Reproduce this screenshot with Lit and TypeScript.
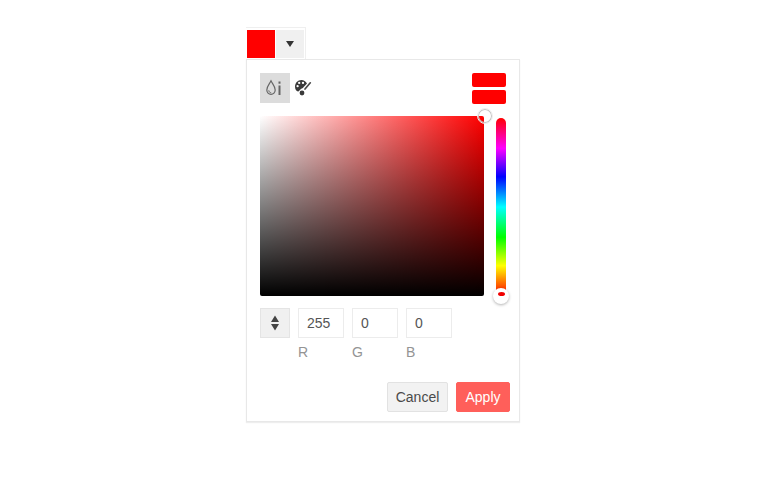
import { LitElement, html, css } from "lit";
import { customElement } from "lit/decorators.js";

@customElement("app-root")
export class AppRoot extends LitElement {
  static styles = css`
    :host { display: block; width: 770px; height: 481px; background: #fff; font-family: "Liberation Sans", Arial, sans-serif; color: #555; overflow: hidden; }
    * { box-sizing: border-box; }
    .wrap { padding: 27px 0 0 246px; }
    .trigger { display: flex; width: 60px; height: 32px; padding: 2px 1px 0 1px; gap: 1px; border: 1px solid #efefef; border-bottom: none; border-left: none; background: #fff; }
    .swatch { width: 28px; height: 28px; background: #f00; }
    .arrow { flex: 1; height: 28px; background: #f0f0f0; display: flex; align-items: center; justify-content: center; }
    .panel { width: 274px; height: 363px; border: 1px solid #e8e8e8; background: #fff; padding: 13px 9px 0 13px; box-shadow: 0 1px 1px #eee; }
    .top { display: flex; justify-content: space-between; height: 31px; padding-right: 4px; }
    .tabs { display: flex; }
    .tab { width: 30px; height: 30px; display: flex; align-items: center; justify-content: center; }
    .tab.on { background: #dcdcdc; }
    .tab.plain { justify-content: flex-start; padding-left: 4px; }
    .preview { display: flex; flex-direction: column; gap: 3px; }
    .preview i { display: block; width: 34px; height: 14px; background: #f00; border-radius: 2px; }
    .picker { display: flex; margin-top: 12px; height: 180px; }
    .sv { width: 224px; height: 180px; border-radius: 2px; position: relative; background: linear-gradient(to top, #000, rgba(0,0,0,0)), linear-gradient(to right, #fff, #f00); }
    .thumb { position: absolute; left: 217px; top: -8px; width: 16px; height: 16px; border-radius: 50%; border: 1px solid #efefef; box-shadow: inset 0 0 0 1px #c4c4c4; }
    .hue { width: 10px; height: 178px; margin: 2px 0 0 12px; border-radius: 5px; position: relative; background: linear-gradient(to bottom, #f00 0%, #f0f 17%, #00f 33%, #0ff 50%, #0f0 67%, #ff0 83%, #f00 100%); }
    .knob { position: absolute; left: -3px; top: 170px; width: 16px; height: 16px; border-radius: 50%; background: #fff; box-shadow: 0 1px 3px rgba(0,0,0,.3); display: flex; justify-content: center; padding-top: 4px; }
    .knob i { display: block; width: 7px; height: 4px; border-radius: 50%; background: #f00000; }
    .inputs { display: flex; gap: 8px; margin-top: 12px; }
    .toggle { width: 30px; height: 30px; background: #f0f0f0; border: 1px solid #e4e4e4; display: flex; align-items: center; justify-content: center; }
    .field { width: 46px; }
    .box { height: 30px; border: 1px solid #ececec; font-size: 14px; line-height: 28px; padding-left: 8px; }
    .label { margin-top: 6px; font-size: 14px; line-height: 16px; color: #949494; }
    .actions { display: flex; justify-content: flex-end; gap: 8px; margin-top: 22px; }
    .btn { height: 30px; font-size: 14px; line-height: 28px; text-align: center; border-radius: 2px; }
    .cancel { width: 61px; background: #f2f2f2; border: 1px solid #e2e2e2; color: #4a4a4a; }
    .apply { width: 54px; background: #ff5f5a; border: 1px solid #ff5f5a; color: #fff; }
  `;

  render() {
    const fields = [["255", "R"], ["0", "G"], ["0", "B"]];
    return html`<div class="wrap">
      <div class="trigger">
        <div class="swatch"></div>
        <div class="arrow"><svg width="10" height="7" viewBox="0 0 10 7"><path d="M1 0h8L5 6z" fill="#333"/></svg></div>
      </div>
      <div class="panel">
        <div class="top">
          <div class="tabs">
            <div class="tab on">
              <svg width="20" height="18" viewBox="0 0 20 18" fill="none">
                <path d="M6 1.800C4.600 4.800 1.800 7 1.800 11.100a4.200 4.200 0 0 0 8.400 0C10.200 7 7.400 4.800 6 1.800z" stroke="#666" stroke-width="1.200"/>
                <path d="M3.800 11.300c0 1.500 1 2.400 2.400 2.400" stroke="#666" stroke-width="1"/>
                <rect x="13.500" y="2.500" width="2" height="2.200" fill="#666"/>
                <rect x="13.500" y="6.500" width="2" height="9.500" fill="#666"/>
              </svg>
            </div>
            <div class="tab plain">
              <svg width="18" height="18" viewBox="0 0 18 18">
                <path d="M7.500 1C3.600 1 1 4 1 7.800c0 2.600 1.400 4.700 3 4.700 1.400 0 1.500-1.600 3-2.500 1-.6 2-1 2.700-2L13 4.400C11.700 2.300 9.800 1 7.500 1z" fill="#3a3a3a"/>
                <circle cx="3.600" cy="7.200" r="1.150" fill="#fff"/>
                <circle cx="5.200" cy="3.900" r="1.150" fill="#fff"/>
                <circle cx="9" cy="3.900" r="1.150" fill="#fff"/>
                <path d="M16.300 3.800 11 10" stroke="#4a4a4a" stroke-width="1.700" stroke-linecap="round"/>
                <circle cx="8" cy="14" r="2.400" fill="#3a3a3a"/>
              </svg>
            </div>
          </div>
          <div class="preview"><i></i><i></i></div>
        </div>
        <div class="picker">
          <div class="sv"><div class="thumb"></div></div>
          <div class="hue"><div class="knob"><i></i></div></div>
        </div>
        <div class="inputs">
          <div class="toggle"><svg width="10" height="16" viewBox="0 0 10 16"><path d="M5 .5 9 7H1zM5 15.500 1 9h8z" fill="#444"/></svg></div>
          ${fields.map(([v, l]) => html`<div class="field"><div class="box">${v}</div><div class="label">${l}</div></div>`)}
        </div>
        <div class="actions">
          <div class="btn cancel">Cancel</div>
          <div class="btn apply">Apply</div>
        </div>
      </div>
    </div>`;
  }
}
